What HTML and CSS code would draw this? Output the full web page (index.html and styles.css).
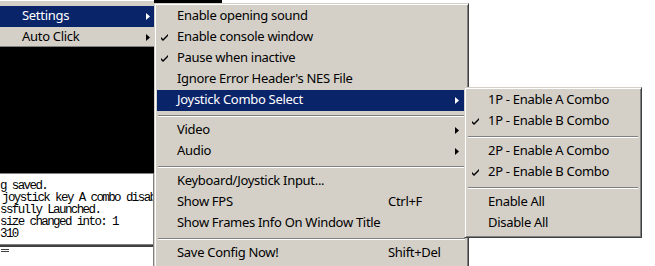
FILE: index.html
```html
<!DOCTYPE html>
<html lang="en">

<head>
  <meta charset="UTF-8" />
  <meta name="viewport" content="width=device-width, initial-scale=1.0" />
  <link rel="stylesheet" href="styles.css">
  <title>Settings menu</title>
</head>

<body>
  <div class="page">
    <div class="window">
      <div class="parent-menu">
        <div class="item active">
          <span class="label">Settings</span>
          <svg class="arrow" width="4" height="7" viewBox="0 0 4 7"><polygon points="0,0 4,3.5 0,7" /></svg>
        </div>
        <div class="item">
          <span class="label">Auto Click</span>
          <svg class="arrow" width="4" height="7" viewBox="0 0 4 7"><polygon points="0,0 4,3.5 0,7" /></svg>
        </div>
      </div>
      <div class="screen"></div>
      <div class="console">
        <div class="line">g saved.</div>
        <div class="line indent">joystick key A combo disab</div>
        <div class="line">ssfully Launched.</div>
        <div class="line">size changed into: 1</div>
        <div class="line">310</div>
      </div>
      <div class="status">
        <span class="status-icon"></span>
      </div>
    </div>
  </div>

  <div class="top-strip"></div>

  <div class="menu main-menu">
    <div class="item"><span class="check"></span><span class="label">Enable opening sound</span></div>
    <div class="item">
      <span class="check"><svg width="7" height="7" viewBox="0 0 7 7"><path d="M0 3 L0 5 L2 7 L7 2 L7 0 L2 5 Z" /></svg></span>
      <span class="label">Enable console window</span>
    </div>
    <div class="item">
      <span class="check"><svg width="7" height="7" viewBox="0 0 7 7"><path d="M0 3 L0 5 L2 7 L7 2 L7 0 L2 5 Z" /></svg></span>
      <span class="label">Pause when inactive</span>
    </div>
    <div class="item"><span class="check"></span><span class="label">Ignore Error Header's NES File</span></div>
    <div class="item active">
      <span class="check"></span><span class="label">Joystick Combo Select</span>
      <svg class="arrow" width="4" height="7" viewBox="0 0 4 7"><polygon points="0,0 4,3.5 0,7" /></svg>
    </div>
    <div class="sep"></div>
    <div class="item">
      <span class="check"></span><span class="label">Video</span>
      <svg class="arrow" width="4" height="7" viewBox="0 0 4 7"><polygon points="0,0 4,3.5 0,7" /></svg>
    </div>
    <div class="item">
      <span class="check"></span><span class="label">Audio</span>
      <svg class="arrow" width="4" height="7" viewBox="0 0 4 7"><polygon points="0,0 4,3.5 0,7" /></svg>
    </div>
    <div class="sep"></div>
    <div class="item"><span class="check"></span><span class="label">Keyboard/Joystick Input...</span></div>
    <div class="item"><span class="check"></span><span class="label">Show FPS</span><span class="key">Ctrl+F</span></div>
    <div class="item"><span class="check"></span><span class="label">Show Frames Info On Window Title</span></div>
    <div class="sep"></div>
    <div class="item"><span class="check"></span><span class="label">Save Config Now!</span><span class="key">Shift+Del</span></div>
  </div>

  <div class="menu sub-menu">
    <div class="item"><span class="check"></span><span class="label">1P - Enable A Combo</span></div>
    <div class="item">
      <span class="check"><svg width="7" height="7" viewBox="0 0 7 7"><path d="M0 3 L0 5 L2 7 L7 2 L7 0 L2 5 Z" /></svg></span>
      <span class="label">1P - Enable B Combo</span>
    </div>
    <div class="sep"></div>
    <div class="item"><span class="check"></span><span class="label">2P - Enable A Combo</span></div>
    <div class="item">
      <span class="check"><svg width="7" height="7" viewBox="0 0 7 7"><path d="M0 3 L0 5 L2 7 L7 2 L7 0 L2 5 Z" /></svg></span>
      <span class="label">2P - Enable B Combo</span>
    </div>
    <div class="sep"></div>
    <div class="item"><span class="check"></span><span class="label">Enable All</span></div>
    <div class="item"><span class="check"></span><span class="label">Disable All</span></div>
  </div>
</body>

</html>
```

FILE: styles.css
```css
* {
  margin: 0px;
  padding: 0px;
  box-sizing: border-box;
}

body {
  width: 655px;
  height: 266px;
  overflow: hidden;
  position: relative;
  background-color: #fff;
  font-family: "Noto Sans", Tahoma, sans-serif;
  font-size: 13px;
  letter-spacing: -0.3px;
  color: #000;
}

.page {
  display: flex;
  height: 266px;
}

.window {
  width: 154px;
  display: flex;
  flex-direction: column;
}

/* parent popup, only its right part is on screen */
.parent-menu {
  background-color: #d4d0c8;
  padding-top: 5px;
  height: 47px;
  border-top: 1px solid #fff;
  border-bottom: 1px solid #808080;
}

.parent-menu .item {
  padding-left: 22px;
  padding-right: 4px;
}

.screen {
  height: 126px;
  background-color: #000;
}

.console {
  height: 71px;
  background-color: #fff;
  border-top: 1px solid #808080;
  border-right: 1px solid #808080;
  padding-top: 6px;
  overflow: hidden;
  font-family: "Liberation Mono", monospace;
  font-size: 12.5px;
  letter-spacing: -1.6px;
}

.line {
  height: 12px;
  line-height: 12px;
  white-space: pre;
}

.line.indent {
  padding-left: 2px;
}

.status {
  flex: 1;
  border-top: 1px solid #808080;
  box-shadow: inset 0 2px #404040;
  border-right: 1px solid #808080;
  padding: 4px 0 0 1px;
}

.status-icon {
  display: block;
  width: 8px;
  height: 3px;
  border-top: 1px solid #404040;
  border-bottom: 1px solid #404040;
}

.top-strip {
  position: absolute;
  left: 154px;
  top: 0;
  width: 68px;
  height: 3px;
  background-color: #000;
}

/* popup menus lie over the window */
.menu {
  position: absolute;
  background-color: #d4d0c8;
  border: 1px solid;
  border-color: #d4d0c8 #404040 #404040 #d4d0c8;
  box-shadow: inset 1px 1px #fff, inset -1px -1px #808080;
  padding: 2px;
}

.main-menu {
  left: 154px;
  top: 3px;
  width: 315px;
  height: 266px;
}

.sub-menu {
  left: 464px;
  top: 87px;
  width: 178px;
  height: 151px;
}

.item {
  display: flex;
  align-items: center;
  height: 21px;
  padding-bottom: 3px;
  white-space: nowrap;
}

.menu .item {
  padding-right: 7px;
}

.item.active {
  background-color: #0a246a;
  color: #fff;
}

.item.active .arrow {
  fill: #fff;
}

.check {
  width: 20px;
  padding-left: 4px;
  padding-top: 3px;
  display: flex;
  align-items: center;
}

.sub-menu .check {
  width: 21px;
  padding-left: 5px;
}

.label {
  flex: 1;
}

.key {
  width: 71px;
}

.arrow {
  fill: #000;
  margin-left: auto;
  margin-top: 3px;
}

.sep {
  height: 9px;
  padding-top: 4px;
  margin: 0 1px;
}

.sep::before {
  content: "";
  display: block;
  height: 1px;
  background-color: #808080;
  box-shadow: 0 1px #fff;
}
```
